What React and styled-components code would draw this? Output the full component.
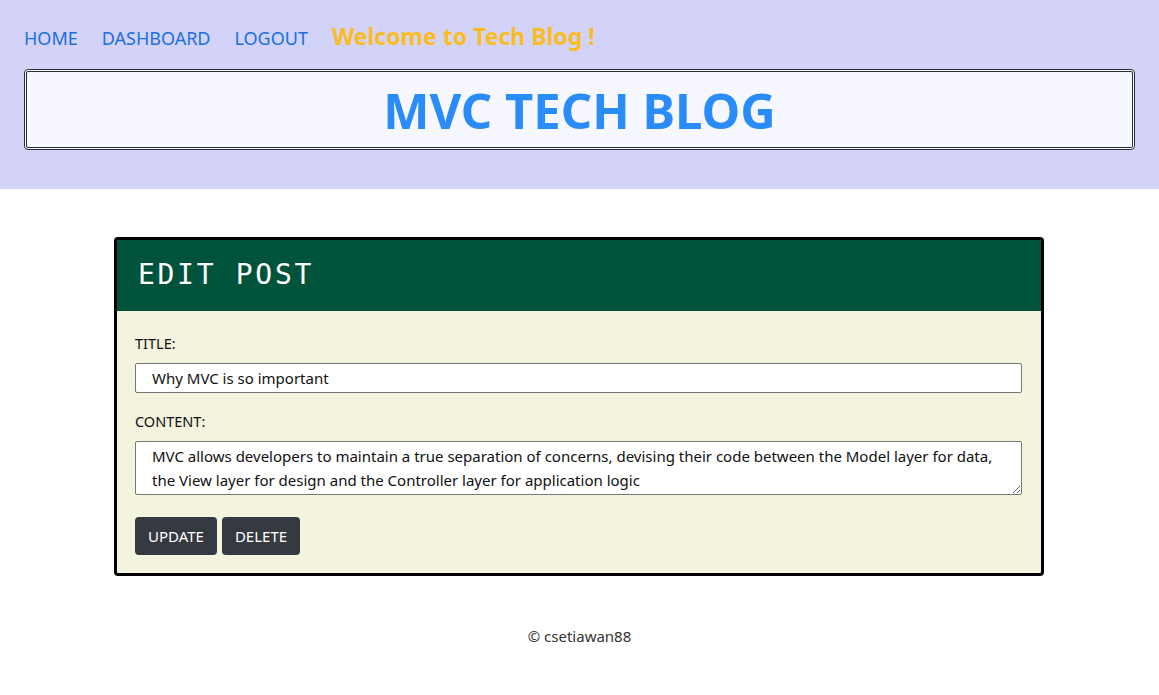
import React from "react";
import styled, { createGlobalStyle } from "styled-components";

const Global = createGlobalStyle`
  html, body { margin: 0; padding: 0; background: #fff; }
  body { font-family: "Noto Sans", "Open Sans", sans-serif; color: #212529; }
  * { box-sizing: border-box; }
`;

const Header = styled.header`
  background: #d3d3fa;
  padding: 20px 24px 39px;
`;

const Nav = styled.nav`
  display: flex;
  align-items: baseline;
  gap: 24px;
  height: 36px;
`;

const NavLink = styled.a`
  color: #1a6fe0;
  text-decoration: none;
  font-size: 18px;
  text-transform: uppercase;
`;

const Welcome = styled.span`
  color: #fbbc1e;
  font-weight: 700;
  font-size: 23px;
`;

const TitleBox = styled.div`
  margin-top: 13px;
  border: 3px double #2b2d36;
  border-radius: 4px;
  background: #f7f7ff;
  height: 81px;
  display: flex;
  align-items: center;
  justify-content: center;
`;

const SiteTitle = styled.h1`
  margin: 0;
  color: #2a8cf8;
  font-size: 49px;
  font-weight: 700;
  line-height: 1;
  padding-top: 2px;
`;

const Main = styled.main`
  padding: 48px 115px 0 114px;
`;

const Card = styled.section`
  border: 3px solid #000;
  border-radius: 4px;
  overflow: hidden;
  background: #f3f3de;
`;

const CardHeader = styled.div`
  background: #00533b;
  height: 71px;
  display: flex;
  align-items: center;
  padding: 0 21px 2px;
`;

const CardTitle = styled.h2`
  margin: 0;
  color: #fff;
  font-family: "DejaVu Sans Mono", "Liberation Mono", monospace;
  font-weight: 400;
  font-size: 28px;
  letter-spacing: 2.7px;
`;

const Form = styled.form`
  padding: 22px 19px 18px 18px;
  display: flex;
  flex-direction: column;
`;

const Label = styled.label`
  font-size: 14.5px;
  color: #111;
  margin-bottom: 10px;
`;

const Input = styled.input`
  height: 30px;
  border: 1px solid #767676;
  border-radius: 2px;
  background: #fff;
  padding: 0 16px;
  font-family: inherit;
  font-size: 15px;
  color: #111;
  margin-bottom: 18px;
`;

const TextArea = styled.textarea`
  height: 54px;
  border: 1px solid #767676;
  border-radius: 2px;
  background: #fff;
  padding: 2px 16px 0;
  font-family: inherit;
  font-size: 15px;
  line-height: 24px;
  color: #111;
  resize: vertical;
  margin-bottom: 22px;
`;

const Buttons = styled.div`
  display: flex;
  gap: 5px;
`;

const Button = styled.button`
  background: #343a40;
  color: #fff;
  border: none;
  border-radius: 4px;
  height: 38px;
  padding: 0 13px;
  font-family: inherit;
  font-size: 15px;
`;

const Footer = styled.footer`
  text-align: center;
  padding-top: 50px;
  font-size: 15px;
  color: #333;
`;

export default function App() {
  return (
    <>
      <Global />
      <Header>
        <Nav>
          <NavLink href="#">Home</NavLink>
          <NavLink href="#">Dashboard</NavLink>
          <NavLink href="#">Logout</NavLink>
          <Welcome>Welcome to Tech Blog !</Welcome>
        </Nav>
        <TitleBox>
          <SiteTitle>MVC TECH BLOG</SiteTitle>
        </TitleBox>
      </Header>
      <Main>
        <Card>
          <CardHeader>
            <CardTitle>EDIT POST</CardTitle>
          </CardHeader>
          <Form onSubmit={(e) => e.preventDefault()}>
            <Label>TITLE:</Label>
            <Input defaultValue="Why MVC is so important" />
            <Label>CONTENT:</Label>
            <TextArea defaultValue="MVC allows developers to maintain a true separation of concerns, devising their code between the Model layer for data, the View layer for design and the Controller layer for application logic" />
            <Buttons>
              <Button>UPDATE</Button>
              <Button>DELETE</Button>
            </Buttons>
          </Form>
        </Card>
      </Main>
      <Footer>© csetiawan88</Footer>
    </>
  );
}
